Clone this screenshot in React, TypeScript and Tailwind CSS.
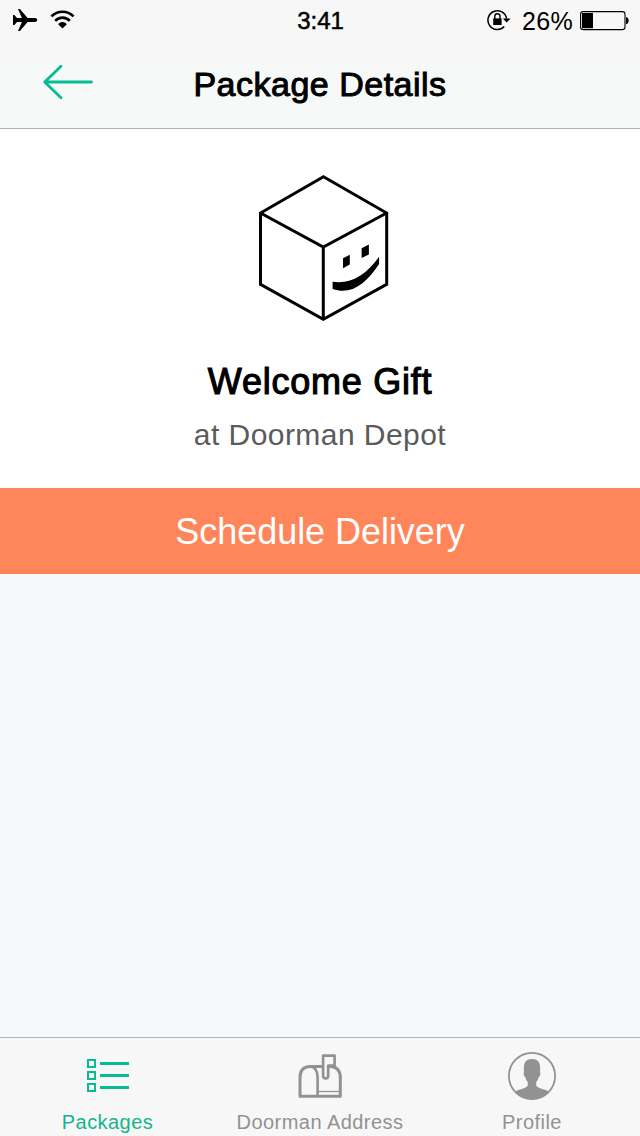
import type { ReactNode } from "react";

function AirplaneIcon() {
  return (
    <svg width="25" height="24" viewBox="0 0 25 24">
      <path
        d="M5 1H6.9L14.6 10.1H21.8C23.5 10.1 24.2 11 24.2 12C24.2 13 23.5 13.9 21.8 13.9H14.6L6.9 23H5L8.9 13.9H4L1.3 17H0V7H1.3L4 10.1H8.9Z"
        fill="#000"
      />
    </svg>
  );
}

function WifiIcon() {
  return (
    <svg width="26" height="20" viewBox="0 0 26 20" fill="none" stroke="#000">
      <path d="M1.4 7.4C7.8 1.1 17.2 1.1 23.6 7.4" strokeWidth="2.6" />
      <path d="M5.2 11.8C9.4 7.6 15.6 7.6 19.8 11.8" strokeWidth="2.6" />
      <path d="M8.2 15.2C10.4 12.2 14.6 12.2 16.8 15.2L12.5 19.6Z" fill="#000" stroke="none" />
    </svg>
  );
}

function RotationLockIcon() {
  return (
    <svg width="24" height="22" viewBox="0 0 24 22" fill="none" stroke="#000">
      <path d="M19.6 9.6A9.4 9.4 0 1 0 17.2 17.6" strokeWidth="1.5" />
      <path d="M15.8 9.4H23.6L19.7 13.6Z" fill="#000" stroke="none" />
      <rect x="6.2" y="9.4" width="8.4" height="6.6" fill="#000" stroke="none" />
      <path d="M7.8 10V7.4A2.6 2.6 0 0 1 13 7.4V10" strokeWidth="1.4" />
    </svg>
  );
}

function BatteryIcon() {
  return (
    <svg width="50" height="20" viewBox="0 0 50 20">
      <rect x="0.6" y="0.6" width="44.4" height="18" rx="2.6" fill="none" stroke="#000" strokeWidth="1.1" />
      <rect x="2" y="2" width="11" height="15.2" fill="#000" />
      <path d="M46 6C49.6 6.6 49.6 12.6 46 13.2Z" fill="#000" />
    </svg>
  );
}

function BackArrow() {
  return (
    <svg
      width="52"
      height="36"
      viewBox="0 0 52 36"
      fill="none"
      stroke="#07bc92"
      strokeWidth="2.8"
      strokeLinecap="round"
      strokeLinejoin="round"
    >
      <path d="M19 2.3L2.7 18L19 33.7M3 18H49.5" />
    </svg>
  );
}

function BoxIcon() {
  return (
    <svg width="132" height="148" viewBox="0 0 132 148" fill="none" stroke="#000" strokeWidth="3">
      <path d="M65.5 2.7L128.7 39V110.3L65.3 145.3L2.5 110.3V39Z" />
      <path d="M2.5 39L65.3 73L128.7 39M65.3 73V145.3" />
      <g fill="#000" stroke="none">
        <path d="M85 84.3L91.8 80.8V90.6L85 94.3Z" />
        <path d="M103.6 74.3L110.9 70.4V80.6L103.6 84Z" />
        <path d="M74.6 107.8C93 110.5 108 101 121.1 82.8V90C108 110 93 121.5 74.6 115Z" />
      </g>
    </svg>
  );
}

function PackagesIcon() {
  return (
    <svg width="48" height="48" viewBox="0 0 48 48" fill="none" stroke="#07bc92">
      <path d="M4 8H11V15H4ZM4 20H11V27H4ZM4 32H11V39H4Z" strokeWidth="2" />
      <path d="M16 11.5H45M16 23.5H45M16 35.5H45" strokeWidth="3" />
    </svg>
  );
}

function MailboxIcon() {
  return (
    <svg width="48" height="48" viewBox="0 0 48 48" fill="none" stroke="#929292" strokeWidth="3" strokeLinejoin="round">
      <path d="M4 44V25.5C4 18 7.5 14.6 14 14.4H34.5C41 14.8 44.3 18.5 44.3 25.5V44.2H4Z" />
      <path d="M14 14.4C19 14.8 21.6 18.5 21.6 25.5V44" strokeWidth="2.6" />
      <path d="M22 39.5H43" strokeWidth="1.3" />
      <path
        d="M27.1 3.7H38.6V13.6H32.2V23.6C32.2 27.4 27.1 27.4 27.1 23.6Z"
        fill="#f7f7f7"
        strokeWidth="2.7"
      />
    </svg>
  );
}

function ProfileIcon() {
  return (
    <svg width="48" height="48" viewBox="0 0 48 48">
      <circle cx="24" cy="24" r="23.1" fill="none" stroke="#929292" strokeWidth="1.8" />
      <path
        d="M7.5 39.5C11.5 36.8 19.5 36.5 19.8 33V30C18.3 28.8 17.6 27 17.2 24.8C15.8 24.4 15.2 21 16 20C15.2 11.5 17 7 24 7C31 7 32.8 11.5 32 20C32.8 21 32.2 24.4 30.8 24.8C30.4 27 29.7 28.8 28.2 30V33C28.5 36.5 36.5 36.8 40.5 39.5C31.5 49.8 16.5 49.8 7.5 39.5Z"
        fill="#929292"
      />
    </svg>
  );
}

interface TabProps {
  label: string;
  icon: ReactNode;
  active?: boolean;
}

function Tab({ label, icon, active }: TabProps) {
  return (
    <button className={`flex flex-col items-center pt-3.5 ${active ? "text-[#13b48d]" : "text-[#929292]"}`}>
      {icon}
      <span className="mt-2.5 text-xl leading-6 tracking-[0.45px]">{label}</span>
    </button>
  );
}

export default function App() {
  return (
    <div className="flex h-[1136px] w-[640px] flex-col overflow-hidden bg-[#f7f8fa] font-['Liberation_Sans',Arial,sans-serif] text-black">
      <div className="grid h-16 grid-cols-3 bg-[#f7f7f7] text-2xl leading-10">
        <div className="flex items-start gap-3 pl-[13px]">
          <div className="pt-2">
            <AirplaneIcon />
          </div>
          <div className="pt-[9px]">
            <WifiIcon />
          </div>
        </div>
        <span className="pl-px pt-px text-center [-webkit-text-stroke:0.5px_black]">3:41</span>
        <div className="flex items-start justify-end pr-2.5">
          <div className="pt-[9px]">
            <RotationLockIcon />
          </div>
          <span className="ml-[11px] pt-px text-[25px] tracking-[0.3px]">26%</span>
          <div className="ml-[7px] pt-[11px]">
            <BatteryIcon />
          </div>
        </div>
      </div>

      <header className="grid h-[65px] grid-cols-[1fr_auto_1fr] items-start border-b border-[#b2b2b2] bg-[#f7f9f9]">
        <button className="justify-self-start pl-[42px]">
          <BackArrow />
        </button>
        <h1 className="text-[34px] leading-10 tracking-[0.5px] [-webkit-text-stroke:1px_black]">
          Package Details
        </h1>
      </header>

      <section className="flex h-[359px] flex-col items-center bg-white pt-[45px]">
        <div className="pl-2">
          <BoxIcon />
        </div>
        <h2 className="mt-10 text-4xl leading-10 tracking-[0.75px] [-webkit-text-stroke:1.1px_black]">
          Welcome Gift
        </h2>
        <p className="mt-[15px] text-3xl leading-9 tracking-[0.45px] text-[#5b5b5b]">at Doorman Depot</p>
      </section>

      <button className="h-[86px] bg-[#ff855a] pt-0.5 text-4xl tracking-[-0.05px] text-white">
        Schedule Delivery
      </button>

      <nav className="mt-auto grid h-[99px] grid-cols-[215px_210px_214px] border-t border-[#b2b2b2] bg-[#f7f7f7]">
        <Tab label="Packages" icon={<PackagesIcon />} active />
        <Tab label="Doorman Address" icon={<MailboxIcon />} />
        <Tab label="Profile" icon={<ProfileIcon />} />
      </nav>
    </div>
  );
}
